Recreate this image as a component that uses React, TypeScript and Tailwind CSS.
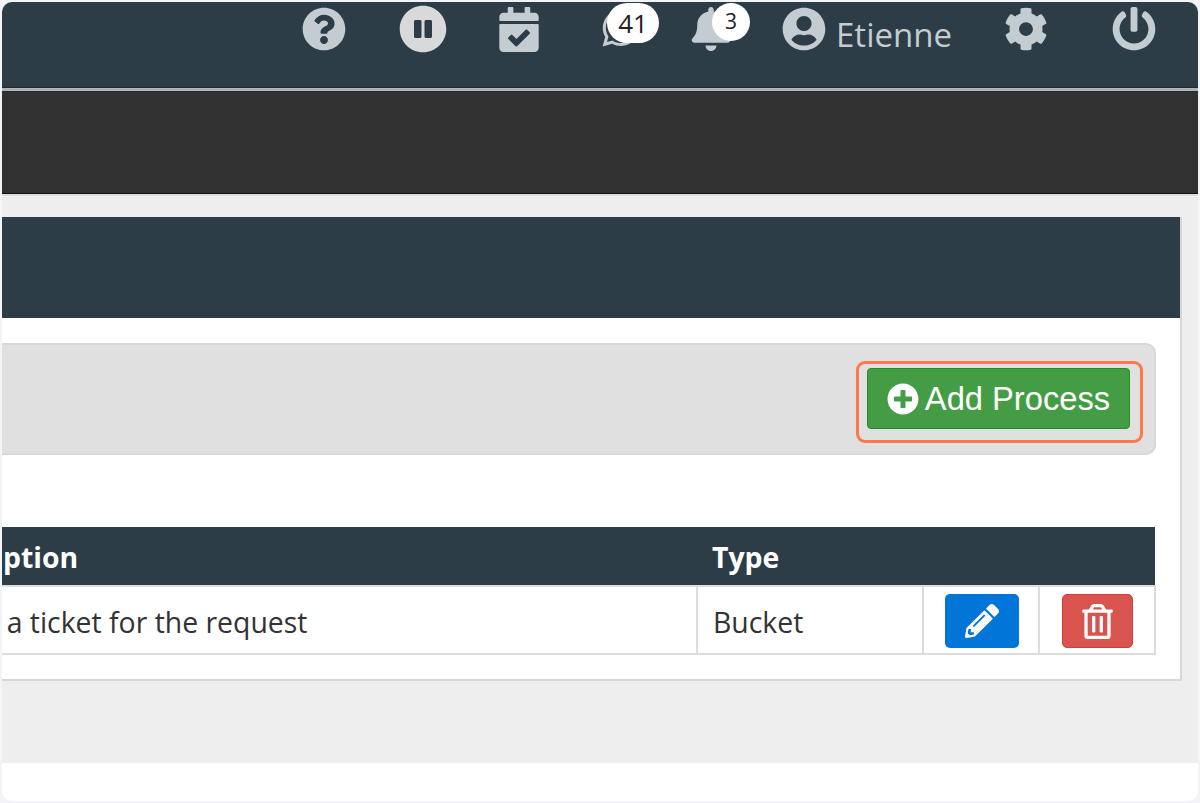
import React from 'react';
import {
  FaQuestionCircle,
  FaPauseCircle,
  FaCalendarCheck,
  FaWhatsapp,
  FaBell,
  FaUserCircle,
  FaCog,
  FaPowerOff,
  FaPlusCircle,
  FaPencilAlt,
  FaRegTrashAlt,
} from 'react-icons/fa';

function Badge({ children, className }: { children: React.ReactNode; className: string }) {
  return (
    <span
      className={`absolute flex items-center justify-center rounded-full bg-white text-[#222] font-['Open_Sans',sans-serif] ${className}`}
    >
      {children}
    </span>
  );
}

function Navbar() {
  return (
    <div className="flex h-[85px] items-center justify-end bg-[#2d3d48] pb-[31px] pr-[42px] text-[#c3ccd1]">
      <FaQuestionCircle className="h-[44px] w-[44px]" />
      <FaPauseCircle className="ml-[53px] h-[48px] w-[48px] text-[#d9d9d9]" />
      <FaCalendarCheck className="ml-[52px] h-[45px] w-[40px]" />
      <div className="relative ml-[62px] h-[44px] w-[40px]">
        <FaWhatsapp className="h-[42px] w-[40px]" />
        <Badge className="-right-[18px] -top-[4px] h-[40px] w-[52px] text-[26px]">41</Badge>
      </div>
      <div className="relative ml-[50px] h-[44px] w-[40px]">
        <FaBell className="h-[44px] w-[40px]" />
        <Badge className="-right-[19px] -top-[4px] h-[38px] w-[38px] text-[21px]">3</Badge>
      </div>
      <FaUserCircle className="ml-[51px] h-[44px] w-[44px]" />
      <span className="ml-[10px] mt-[10px] font-['Open_Sans',sans-serif] text-[33px] leading-none">Etienne</span>
      <FaCog className="ml-[52px] h-[44px] w-[44px]" />
      <FaPowerOff className="ml-[64px] h-[44px] w-[44px]" />
    </div>
  );
}

function ProcessTable() {
  return (
    <table className="mt-[72px] w-[1252px] -ml-[100px] table-fixed border-collapse font-['Open_Sans',sans-serif] text-[28.4px]">
      <colgroup>
        <col className="w-[794px]" />
        <col className="w-[226px]" />
        <col className="w-[116px]" />
        <col className="w-[116px]" />
      </colgroup>
      <thead>
        <tr className="h-[59px] bg-[#2d3d48] text-left text-white">
          <th className="pl-[12px] pt-[2px] font-bold">Description</th>
          <th className="pl-[15px] pt-[2px] font-bold">Type</th>
          <th></th>
          <th></th>
        </tr>
      </thead>
      <tbody>
        <tr className="h-[68px] text-[#333]">
          <td className="border-2 border-[#dcdcdc] pl-[8px] pt-[4px]">Create a ticket for the request</td>
          <td className="border-2 border-[#dcdcdc] pl-[15px] pt-[4px]">Bucket</td>
          <td className="border-2 border-[#dcdcdc] pl-[2px] pt-[2px] text-center">
            <button className="inline-flex h-[54px] w-[74px] items-center justify-center rounded-[5px] bg-[#0275d8] align-middle text-white">
              <FaPencilAlt className="h-[34px] w-[34px]" />
            </button>
          </td>
          <td className="border-2 border-[#dcdcdc] pt-[2px] text-center">
            <button className="inline-flex h-[54px] w-[71px] items-center justify-center rounded-[5px] border border-[#d43f3a] bg-[#d9534f] align-middle text-white">
              <FaRegTrashAlt className="h-[35px] w-[31px]" />
            </button>
          </td>
        </tr>
      </tbody>
    </table>
  );
}

export default function App() {
  return (
    <div className="h-[803px] w-[1200px] bg-[#f4f4f8] p-[2px]">
      <div className="flex h-[799px] flex-col overflow-hidden rounded-[10px] bg-white">
        <Navbar />
        <div className="h-[5px] border-y border-y-[#1f2c35] bg-[#b4b4b4]" />
        <div className="h-[102px] border-b border-b-[#111] bg-[#323232]" />
        <div className="h-[569px] border-t-2 border-t-[#dddddd] bg-[#eeeeee] pt-[21px]">
          <div className="mr-[16px] h-[464px] border-b-2 border-r-2 border-[#d6d6d6] bg-white">
            <div className="h-[101px] bg-[#2d3d48]" />
            <div className="mr-[24px] mt-[25px] flex h-[112px] items-start justify-end rounded-r-[10px] border-2 border-l-0 border-[#d8d8d8] bg-[#e0e0e0] pr-[11px] pt-[16px]">
              <div className="rounded-[9px] border-[3px] border-[#ff7849] pb-[11px] pl-[8px] pr-[10px] pt-[4px]">
                <button className="flex h-[61px] w-[263px] items-center justify-center gap-[6px] rounded-[4px] border border-[#1f8f1f] bg-[#449d44] font-['Liberation_Sans',sans-serif] text-[32.7px] text-white">
                  <FaPlusCircle className="h-[32px] w-[32px]" />
                  Add Process
                </button>
              </div>
            </div>
            <ProcessTable />
          </div>
        </div>
      </div>
    </div>
  );
}
